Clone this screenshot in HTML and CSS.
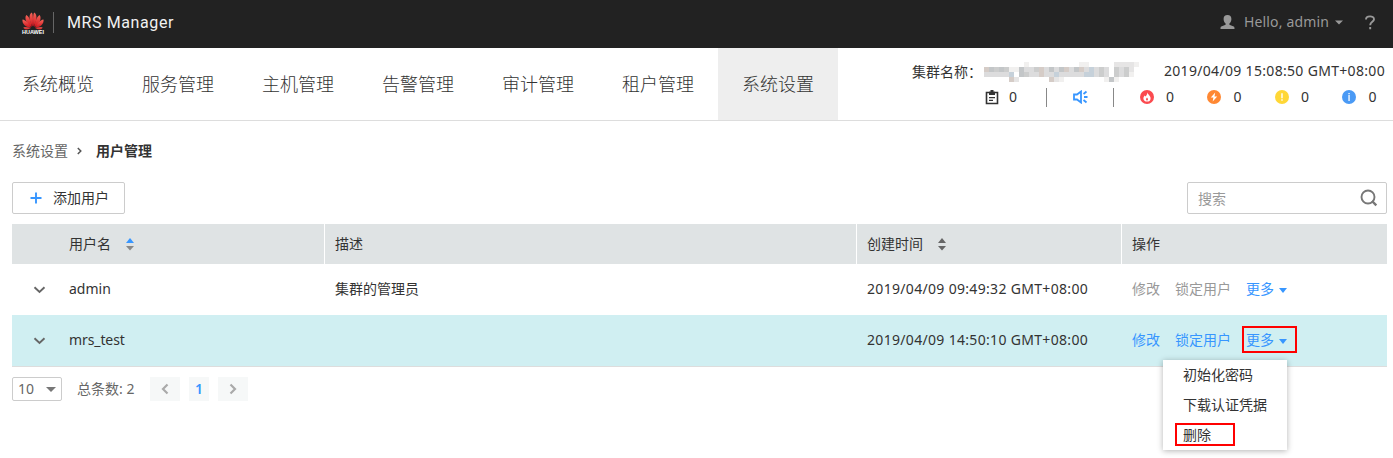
FILE: index.html
```html
<!DOCTYPE html>
<html lang="zh-CN">
<head>
<meta charset="utf-8">
<title>MRS Manager</title>
<link rel="stylesheet" href="styles.css">
</head>
<body>
<header class="topbar">
  <svg class="logo" width="24" height="22" viewBox="0 0 24 22">
    <defs><linearGradient id="red" x1="0" y1="0" x2="0" y2="1"><stop offset="0" stop-color="#f4665a"/><stop offset="1" stop-color="#d2121c"/></linearGradient></defs>
    <g fill="url(#red)">
      <path d="M11.700 14.500C8 9 7.400 2.500 10.700.5c1.500 1.600 1.400 8.500 1 14z"/>
      <path d="M12.300 14.500C16 9 16.600 2.500 13.300.5c-1.500 1.600-1.400 8.500-1 14z"/>
      <path d="M10.800 14.800C6 12.500 2.800 6.500 5.300 2.900 8.200 4.200 10.100 10 10.800 14.800z"/>
      <path d="M13.200 14.800C18 12.500 21.200 6.500 18.700 2.900 15.800 4.200 13.900 10 13.200 14.800z"/>
      <path d="M10 15.400C5 15.900.8 12 1.500 7.600 5 8 8 12 10 15.400z"/>
      <path d="M14 15.400C19 15.900 23.200 12 22.500 7.600 19 8 16 12 14 15.400z"/>
      <path d="M9.800 16.100C6.800 18.200 3.500 17.900 2.400 15.400 5 15 7.500 15.400 9.800 16.100z"/>
      <path d="M14.200 16.100C17.200 18.200 20.500 17.900 21.600 15.400 19 15 16.500 15.400 14.200 16.100z"/>
    </g>
    <text class="logo-text" x="1" y="21.500" textLength="22" lengthAdjust="spacingAndGlyphs">HUAWEI</text>
  </svg>
  <span class="bar"></span>
  <span class="brand">MRS Manager</span>
  <div class="account">
    <svg width="15" height="15" viewBox="0 0 15 15" fill="#999"><path d="M7.500 0c2.600 0 3.900 1.500 3.900 4 0 2-.9 3.600-2 4.500v1.200l4.300 1.800c.7.300.8 1 .8 2.500H.5c0-1.500.1-2.200.8-2.500l4.300-1.800V8.500c-1.100-.9-2-2.500-2-4.500 0-2.500 1.300-4 3.900-4z"/></svg>
    <span class="hello">Hello, admin</span>
    <svg width="8" height="5" viewBox="0 0 8 5" fill="#999"><path d="M0 .5h8L4 4.500z"/></svg>
    <svg class="help" width="12" height="15" viewBox="0 0 12 15"><path d="M2 4.500C2 .4 10 .4 10 4.200c0 2.600-3.800 2.700-3.800 6M6.200 12v2.200" fill="none" stroke="#999" stroke-width="1.900"/></svg>
  </div>
</header>
<nav class="nav">
  <a class="tab">系统概览</a><a class="tab">服务管理</a><a class="tab">主机管理</a><a class="tab">告警管理</a><a class="tab">审计管理</a><a class="tab">租户管理</a><a class="tab active">系统设置</a>
  <div class="status">
    <div class="cluster">
      <span class="cluster-label">集群名称<span class="colon">：</span></span>
      <svg class="mosaic" width="155" height="20" viewBox="0 0 31 4" preserveAspectRatio="none" shape-rendering="crispEdges">
        <path fill="#dcdcdd" d="M0 1h5v2H0zM7 1h18v2H7zM26 1h3v2h-3z"/>
        <path fill="#f1f0ef" d="M5 1h2v1H5zM8 0h1v1H8zM19 0h2v1h-2zM30 0h1v1h-1zM15 3h1v1h-1zM24 3h1v1h-1zM26 3h1v1h-1zM29 2h1v1h-1z"/>
        <path fill="#e6e5e5" d="M26 0h4v1h-4zM29 1h1v1h-1zM6 3h1v1H6zM14 3h1v1h-1z"/>
        <path fill="#c3c6c8" d="M1 1h1v1H1zM3 1h1v1H3zM7 1h1v2H7zM13 1h1v1h-1zM18 1h1v1h-1zM15 1h1v1h-1zM25 3h1v1h-1z"/>
        <path fill="#d5ccc7" d="M0 1h1v1H0zM11 1h1v2h-1zM16 1h1v1h-1zM19 1h1v1h-1zM5 3h1v1H5zM13 3h1v1h-1z"/>
        <path fill="#c6d1da" d="M14 2h1v1h-1zM21 1h1v2h-1zM5 2h1v1H5zM20 2h1v1h-1z"/>
        <path fill="#cccdcd" d="M2 1h1v1H2zM4 1h1v1H4zM8 2h1v1H8zM10 1h1v1h-1zM23 1h1v2h-1zM26 1h1v2h-1zM28 1h1v2h-1z"/>
      </svg>
      <span class="clock">2019/04/09 15:08:50 GMT+08:00</span>
    </div>
    <div class="counters">
      <svg width="14" height="15" viewBox="0 0 14 15"><path d="M4 2.500H1.500v11h11v-11H10" fill="none" stroke="#333" stroke-width="1.600"/><path d="M4 1.500h1.500V0h3v1.500H10V5H4zM4 7h6v1.300H4zM4 9.800h4v1.300H4z" fill="#333"/></svg>
      <span class="num">0</span>
      <span class="rule rule-a"></span>
      <svg width="15" height="14" viewBox="0 0 15 14" fill="none" stroke="#3796ff" stroke-width="1.800"><path d="M1 4.500h3l4-3v11l-4-3H1zM10.500 4l3-2.500M11 7h3.500M10.500 10l3 2.500"/></svg>
      <span class="rule rule-b"></span>
      <div class="alarm"><svg width="14" height="14" viewBox="0 0 14 14"><circle cx="7" cy="7" r="7" fill="#fb4a4f"/><path d="M7.300 2.200c.2 2 3.300 3.400 3.300 6S8.900 11.600 7 11.600 3.400 10.200 3.400 8.400c0-1.200.7-2.100 1.400-2.900l.6 1C6.600 5.700 7.300 4.100 7.300 2.200z" fill="#fff"/><path d="M7 7.500c1.300 1.200 1.300 3 0 3s-1.300-1.800 0-3z" fill="#fb4a4f"/></svg><span>0</span></div>
      <div class="alarm"><svg width="14" height="14" viewBox="0 0 14 14"><circle cx="7" cy="7" r="7" fill="#ff8833"/><path d="M8.200 2.500L3.800 7.600h2.600l-.7 4 4.500-5.200H7.500z" fill="#fff"/></svg><span>0</span></div>
      <div class="alarm"><svg width="14" height="14" viewBox="0 0 14 14"><circle cx="7" cy="7" r="7" fill="#ffd736"/><path d="M6.300 3.300h1.400v4.900H6.300zM6.300 9.300h1.400v1.400H6.300z" fill="#fff"/></svg><span>0</span></div>
      <div class="alarm"><svg width="14" height="14" viewBox="0 0 14 14"><circle cx="7" cy="7" r="7" fill="#4a9af5"/><path d="M6.400 3h1.300v1.300H6.400zM6.400 5h1.300v6H6.400z" fill="#fff"/></svg><span>0</span></div>
    </div>
  </div>
</nav>
<main class="content">
  <div class="crumbs"><span class="crumb">系统设置</span><svg width="5" height="8" viewBox="0 0 5 8"><path d="M.8 1l3 3-3 3" fill="none" stroke="#555" stroke-width="1.500"/></svg><b class="here">用户管理</b></div>
  <div class="tools">
    <button class="add"><svg width="12" height="12" viewBox="0 0 12 12"><path d="M6 .5v11M.5 6h11" stroke="#3796ff" stroke-width="1.900"/></svg>添加用户</button>
    <div class="search"><span>搜索</span><svg width="18" height="18" viewBox="0 0 18 18" fill="none" stroke="#777"><circle cx="8" cy="8" r="6.500" stroke-width="1.900"/><path d="M12 12l4.300 4.300" stroke-width="2.400"/></svg></div>
  </div>
  <div class="table">
    <div class="row head">
      <div class="cell name">用户名<svg class="sort" width="8" height="13" viewBox="0 0 8 13"><path d="M0 5l4-5 4 5z" fill="#3796ff"/><path d="M0 8h8l-4 4.500z" fill="#888"/></svg></div>
      <div class="cell">描述</div>
      <div class="cell">创建时间<svg class="sort" width="8" height="13" viewBox="0 0 8 13" fill="#666"><path d="M0 5l4-5 4 5zM0 8h8l-4 4.500z"/></svg></div>
      <div class="cell">操作</div>
    </div>
    <div class="row">
      <div class="cell name"><svg class="chev" width="13" height="8" viewBox="0 0 13 8"><path d="M1.500 1.300l5 4.700 5-4.700" fill="none" stroke="#666" stroke-width="1.900"/></svg><span>admin</span></div>
      <div class="cell">集群的管理员</div>
      <div class="cell latin">2019/04/09 09:49:32 GMT+08:00</div>
      <div class="cell ops"><a class="off">修改</a><a class="off">锁定用户</a><a>更多<i class="caret"></i></a></div>
    </div>
    <div class="row selected">
      <div class="cell name"><svg class="chev" width="13" height="8" viewBox="0 0 13 8"><path d="M1.500 1.300l5 4.700 5-4.700" fill="none" stroke="#666" stroke-width="1.900"/></svg><span class="tight">mrs_test</span></div>
      <div class="cell"></div>
      <div class="cell latin">2019/04/09 14:50:10 GMT+08:00</div>
      <div class="cell ops"><a>修改</a><a>锁定用户</a><a class="more">更多<i class="caret"></i>
        <span class="menu"><span>初始化密码</span><span>下载认证凭据</span><span class="del">删除</span></span></a></div>
    </div>
  </div>
  <div class="pager">
    <span class="size">10<i class="caret gray"></i></span>
    <span class="total">总条数: 2</span>
    <span class="page arrow"><svg width="8" height="12" viewBox="0 0 8 12"><path d="M6.500 1.500L2 6l4.500 4.500" fill="none" stroke="#aaa" stroke-width="2.200"/></svg></span>
    <span class="page current">1</span>
    <span class="page arrow"><svg width="8" height="12" viewBox="0 0 8 12"><path d="M1.500 1.500L6 6l-4.500 4.500" fill="none" stroke="#aaa" stroke-width="2.200"/></svg></span>
  </div>
</main>
</body>
</html>
```

FILE: styles.css
```css
*, *::before { box-sizing: border-box; }
body { margin: 0; background: #fff; color: #333; font: 14px/20px "Noto Sans", "Noto Sans CJK SC", sans-serif; height: 458px; overflow: hidden; white-space: nowrap; }
svg { display: block; flex: none; }
.topbar { height: 48px; background: #222; display: flex; align-items: center; padding: 0 17px 4px 21px; }
.logo { margin-top: 1px; }
.logo-text { font: bold 5px "Liberation Sans", sans-serif; fill: #fff; }
.bar { width: 1px; height: 21px; background: #666; margin: 1px 13px 0 8px; }
.brand { font: 16px/20px Roboto, sans-serif; color: #f2f2f2; letter-spacing: .6px; padding-top: 1px; }
.account { margin-left: auto; display: flex; align-items: center; color: #999; }
.hello { margin: 0 6px 0 9px; letter-spacing: .15px; }
.help { margin-left: 21px; }
.nav { height: 73px; border-bottom: 1px solid #ddd; display: flex; padding-right: 8px; }
.tab { width: 120px; font: 300 18px/70px "Noto Sans CJK SC", sans-serif; text-align: center; }
.tab:first-child { width: 118px; padding-right: 2px; }
.active { background: #eee; }
.status { margin-left: auto; padding-top: 13px; }
.cluster { display: flex; align-items: center; height: 20px; }
.cluster-label { width: 72px; }
.colon { font-family: "Noto Sans CJK TC", sans-serif; }
.mosaic { margin: 2px 25px 0 0; }
.clock, .latin { letter-spacing: .32px; }
.counters { display: flex; align-items: center; height: 20px; margin-top: 6px; padding-left: 73px; }
.num { margin-left: 10px; }
.rule { width: 1px; height: 19px; background: #888; }
.rule-a { margin: 0 26px 0 29px; }
.rule-b { margin: 0 26px 0 25px; }
.alarm { display: flex; align-items: center; gap: 12px; width: 67.500px; }
.alarm:last-child { width: 34px; }
.content { padding: 20px 6px 0 12px; }
.crumbs { display: flex; align-items: center; height: 20px; color: #666; }
.crumbs svg { margin: 0 14px 0 9px; }
.here { color: #333; }
.tools { display: flex; justify-content: space-between; margin-top: 21px; }
.add { font: inherit; color: #333; background: #fff; border: 1px solid #ccc; border-radius: 2px; width: 113px; height: 32px; padding: 0 0 0 17px; display: flex; align-items: center; gap: 11px; }
.search { width: 200px; height: 32px; border: 1px solid #ccc; border-radius: 2px; display: flex; align-items: center; justify-content: space-between; padding: 0 8px 0 10px; color: #999; }
.search span { padding-top: 1px; }
.table { margin-top: 10px; }
.row { display: grid; grid-template-columns: 312px 532px 265px 266px; height: 51px; }
.cell { display: flex; align-items: center; padding: 0 0 2px 11px; }
.name { padding-left: 57px; }
.head { height: 40px; background: #dfe3e4; }
.head .cell { padding-bottom: 0; }
.head .cell + .cell { padding-left: 10px; border-left: 1px solid #fff; }
.sort { margin-left: 15px; }
.chev { margin: 3px 23px 0 -36px; }
.tight { letter-spacing: -.1px; }
.selected { height: 52px; background: #d0eff2; border-bottom: 1px solid #ddd; }
.ops { gap: 15px; color: #3796ff; }
.off { color: #999; }
.caret { display: inline-block; border: 4px solid transparent; border-top: 5px solid #3796ff; border-bottom: 0; margin-left: 5px; vertical-align: 1px; }
.more { position: relative; }
.more::before { content: ""; position: absolute; left: -4px; top: -4px; width: 55px; height: 27px; border: 2px solid #f00; }
.menu { position: absolute; left: -83px; top: 30px; width: 124px; height: 90px; background: #fff; box-shadow: 0 1px 6px rgba(0,0,0,.3); color: #333; }
.menu span { display: block; line-height: 30px; padding-left: 20px; }
.menu .del { position: relative; }
.del::before { content: ""; position: absolute; left: 12px; top: 3px; width: 60px; height: 23px; border: 2px solid #f00; }
.pager { display: flex; align-items: center; margin-top: 10px; color: #666; }
.size { width: 50px; height: 24px; border: 1px solid #ccc; border-radius: 2px; display: flex; align-items: center; justify-content: space-between; padding: 0 5px; }
.gray { border-width: 5px 5px 0; border-top-color: #777; }
.total { width: 73px; margin-left: 15px; }
.page { height: 24px; background: #f6f8f8; display: flex; align-items: center; justify-content: center; }
.arrow { width: 30px; }
.current { width: 20px; margin: 0 9px; color: #3796ff; font-weight: 600; }
```
